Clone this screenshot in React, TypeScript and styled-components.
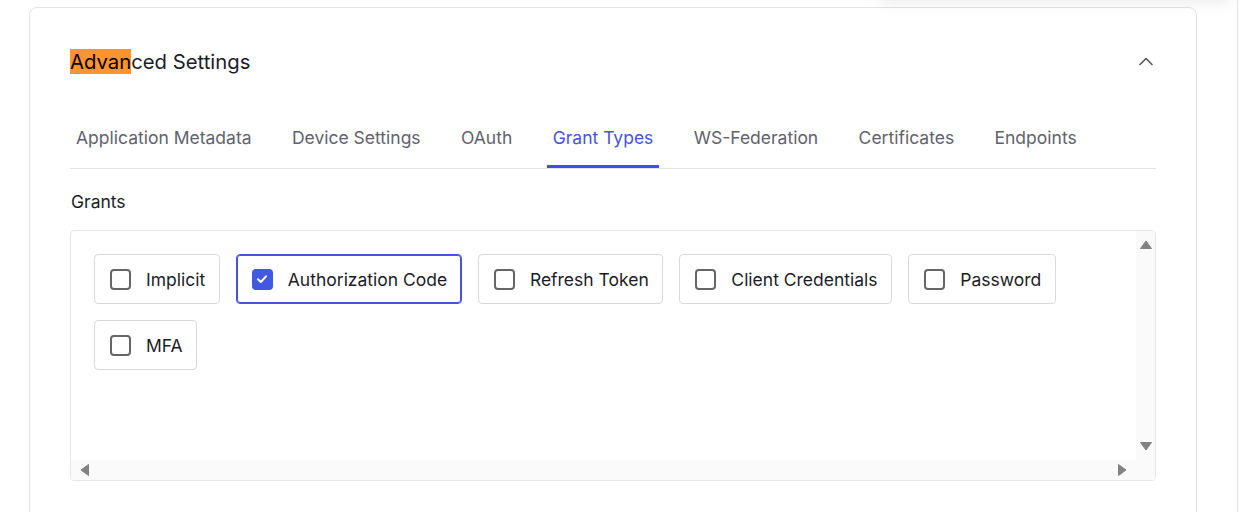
import React, { useState } from "react";
import styled, { createGlobalStyle } from "styled-components";

const GlobalStyle = createGlobalStyle`
  html, body { margin: 0; padding: 0; background: #ffffff; }
  body { font-family: Inter, "Noto Sans", sans-serif; color: #1c1c28; overflow: hidden; }
  * { box-sizing: border-box; }
`;

const Page = styled.div`
  display: flex;
  height: 512px;
  position: relative;
  overflow: hidden;
`;

const Main = styled.div`
  width: 1237px;
  padding: 7px 40px 0 29px;
`;

const SideRail = styled.div`
  flex: 1;
  border-left: 1px solid #e6e6e6;
`;

const TopShadow = styled.div`
  position: absolute;
  top: -30px;
  left: 880px;
  width: 350px;
  height: 30px;
  box-shadow: 0 3px 14px rgba(0, 0, 0, 0.08);
  background: #fff;
`;

const Card = styled.section`
  border: 1px solid #e4e4e4;
  border-radius: 8px;
  padding: 40px;
  background: #fff;
  height: 560px;
`;

const Header = styled.div`
  display: flex;
  align-items: center;
  justify-content: space-between;
  height: 28px;
`;

const Title = styled.h2`
  margin: 0;
  font-size: 20.3px;
  line-height: 28px;
  font-weight: 400;
  color: #1b1c2b;
`;

const Mark = styled.mark`
  background: #ff9431;
  color: #000;
`;

const Toggle = styled.button`
  border: none;
  background: none;
  padding: 0;
  margin-right: -2px;
  display: flex;
  color: #555;
  cursor: pointer;
`;

const TabList = styled.div`
  display: flex;
  gap: 28.4px;
  margin-top: 44px;
  border-bottom: 1px solid #e3e3e3;
`;

const Tab = styled.button<{ $active?: boolean }>`
  border: none;
  background: none;
  font-family: inherit;
  font-size: 17.5px;
  line-height: 24px;
  padding: 6px 6px 15px;
  color: ${(p) => (p.$active ? "#4655d6" : "#5f626d")};
  border-bottom: 3px solid ${(p) => (p.$active ? "#3f51dd" : "transparent")};
  cursor: pointer;
`;

const SectionLabel = styled.div`
  margin-top: 21px;
  font-size: 17.5px;
  line-height: 24px;
  color: #1c1c28;
  padding-left: 1px;
`;

const GrantBox = styled.div`
  margin-top: 16px;
  height: 251px;
  border: 1px solid #e6e6e6;
  border-radius: 4px;
  display: grid;
  grid-template-columns: 1fr 19px;
  grid-template-rows: 1fr 20px;
  overflow: hidden;
`;

const Viewport = styled.div`
  overflow: hidden;
`;

const Rail = styled.div<{ $dir: "v" | "h" }>`
  background: #fafafa;
  display: flex;
  flex-direction: ${(p) => (p.$dir === "v" ? "column" : "row")};
  justify-content: space-between;
  align-items: center;
`;

const Corner = styled.div`
  background: #fafafa;
`;

const Arrow = styled.span<{ $dir: "v" | "h" }>`
  display: flex;
  align-items: center;
  justify-content: center;
  width: ${(p) => (p.$dir === "v" ? "19px" : "28px")};
  height: ${(p) => (p.$dir === "v" ? "28px" : "20px")};
  color: #828282;
`;

const GrantGrid = styled.div`
  display: flex;
  flex-wrap: wrap;
  gap: 16px;
  padding: 23px;
`;

const Item = styled.label<{ $checked?: boolean }>`
  display: flex;
  align-items: center;
  gap: 15px;
  height: 50px;
  padding: 0 13.6px 0 15px;
  border: 1px solid ${(p) => (p.$checked ? "#4156e0" : "#d9d9d9")};
  box-shadow: ${(p) => (p.$checked ? "inset 0 0 0 1px #4156e0" : "none")};
  border-radius: 4px;
  font-size: 17.5px;
  color: #1c1c28;
  cursor: pointer;
`;

const Box = styled.span<{ $checked?: boolean }>`
  width: 21px;
  height: 21px;
  border-radius: 4px;
  border: ${(p) => (p.$checked ? "none" : "2px solid #666")};
  background: ${(p) => (p.$checked ? "#4258e2" : "#fff")};
  display: flex;
  align-items: center;
  justify-content: center;
  flex-shrink: 0;
`;

const grants = [
  "Implicit",
  "Authorization Code",
  "Refresh Token",
  "Client Credentials",
  "Password",
  "MFA",
];

const tabs = [
  "Application Metadata",
  "Device Settings",
  "OAuth",
  "Grant Types",
  "WS-Federation",
  "Certificates",
  "Endpoints",
];

const Tri = ({ rot }: { rot: number }) => (
  <svg width="14" height="14" viewBox="0 0 14 14">
    <polygon
      points="7,3 12.5,10.5 1.5,10.5"
      fill="currentColor"
      stroke="currentColor"
      strokeWidth="1"
      strokeLinejoin="round"
      transform={`rotate(${rot} 7 7)`}
    />
  </svg>
);

export default function App() {
  const [checked, setChecked] = useState<Record<string, boolean>>({
    "Authorization Code": true,
  });
  const [active, setActive] = useState("Grant Types");

  return (
    <>
      <GlobalStyle />
      <Page>
        <TopShadow />
        <Main>
          <Card>
            <Header>
              <Title>
                <Mark>Advan</Mark>ced Settings
              </Title>
              <Toggle aria-label="collapse">
                <svg width="24" height="24" viewBox="0 0 24 24" fill="none" stroke="currentColor" strokeWidth="1.6" strokeLinecap="round" strokeLinejoin="round">
                  <path d="m18 15-6-6-6 6" transform="translate(0 -0.5)" />
                </svg>
              </Toggle>
            </Header>
            <TabList>
              {tabs.map((t) => (
                <Tab key={t} $active={t === active} onClick={() => setActive(t)}>
                  {t}
                </Tab>
              ))}
            </TabList>
            <SectionLabel>Grants</SectionLabel>
            <GrantBox>
              <Viewport>
                <GrantGrid>
                  {grants.map((g) => (
                    <Item
                      key={g}
                      $checked={!!checked[g]}
                      onClick={() => setChecked((c) => ({ ...c, [g]: !c[g] }))}
                    >
                      <Box $checked={!!checked[g]}>
                        {checked[g] && (
                          <svg width="14" height="14" viewBox="0 0 14 14" fill="none" stroke="#fff" strokeWidth="2" strokeLinecap="round" strokeLinejoin="round">
                            <path d="M3 7.3 5.8 10 11 4.3" />
                          </svg>
                        )}
                      </Box>
                      {g}
                    </Item>
                  ))}
                </GrantGrid>
              </Viewport>
              <Rail $dir="v">
                <Arrow $dir="v"><Tri rot={0} /></Arrow>
                <Arrow $dir="v"><Tri rot={180} /></Arrow>
              </Rail>
              <Rail $dir="h">
                <Arrow $dir="h"><Tri rot={270} /></Arrow>
                <Arrow $dir="h"><Tri rot={90} /></Arrow>
              </Rail>
              <Corner />
            </GrantBox>
          </Card>
        </Main>
        <SideRail />
      </Page>
    </>
  );
}
